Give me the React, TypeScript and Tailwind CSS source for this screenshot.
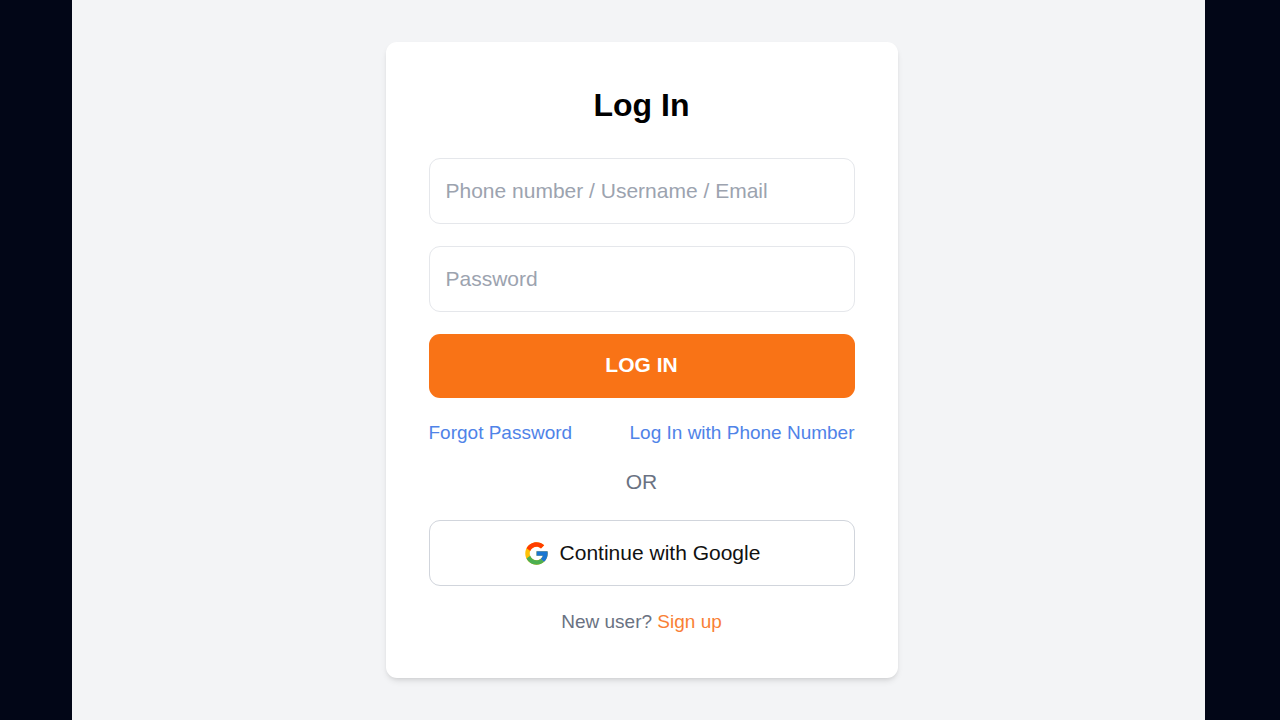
import { FcGoogle } from "react-icons/fc";
import { useState, type FormEvent } from "react";

const inputClass =
  "w-full h-[66px] px-4 rounded-[11px] border border-gray-200 bg-white text-[21px] text-gray-900 placeholder:text-[#9ca3af] focus:outline-none focus:border-[#f97316]";

export default function App() {
  const [login, setLogin] = useState("");
  const [password, setPassword] = useState("");

  const handleSubmit = (e: FormEvent) => {
    e.preventDefault();
  };

  return (
    <div className="min-h-screen flex bg-[#020617] font-['Liberation_Sans',Arial,sans-serif]">
      <div className="w-[72px] shrink-0" />

      <main className="flex-1 flex items-center justify-center bg-gray-100 pl-1.5">
        <div className="w-full max-w-[512px] rounded-[11px] bg-white px-[43px] pt-[43px] pb-[42px] shadow-md">
          <h1 className="mb-[33px] text-center text-[32px] leading-10 font-bold text-black">Log In</h1>

          <form onSubmit={handleSubmit} className="flex flex-col gap-[22px]">
            <input
              type="text"
              aria-label="Phone number / Username / Email"
              placeholder="Phone number / Username / Email"
              value={login}
              onChange={(e) => setLogin(e.target.value)}
              className={inputClass}
            />
            <input
              type="password"
              aria-label="Password"
              placeholder="Password"
              value={password}
              onChange={(e) => setPassword(e.target.value)}
              className={inputClass}
            />
            <button
              type="submit"
              className="h-16 w-full rounded-[11px] bg-[#f97316] pb-0.5 text-[21px] font-bold text-white hover:bg-orange-600"
            >
              LOG IN
            </button>
          </form>

          {/* Secondary links */}
          <div className="mt-[21px] flex justify-between text-[19px] leading-7 text-[#4f83e8]">
            <a href="#forgot" className="hover:underline">Forgot Password</a>
            <a href="#phone" className="hover:underline">Log In with Phone Number</a>
          </div>

          <p className="mt-[19px] mb-[22px] text-center text-[21px] leading-8 text-gray-500">OR</p>

          <button
            type="button"
            className="flex h-[66px] w-full items-center justify-center gap-2.5 rounded-[11px] border border-gray-300 bg-white text-[21px] text-[#111111] hover:bg-gray-50"
          >
            <FcGoogle className="size-[27px]" />
            Continue with Google
          </button>

          <p className="mt-[22px] text-center text-[19px] leading-7 text-gray-500">
            New user?{" "}
            <a href="#signup" className="text-[#f97f35] hover:underline">Sign up</a>
          </p>
        </div>
      </main>

      <div className="w-[75px] shrink-0" />
    </div>
  );
}
